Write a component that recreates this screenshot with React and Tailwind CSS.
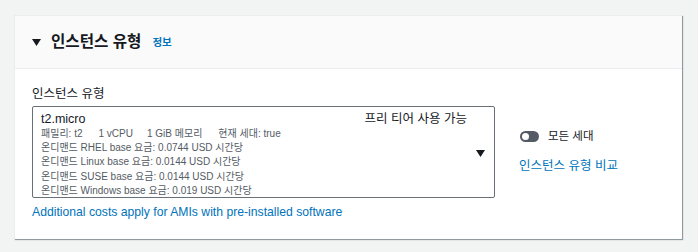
export default function App() {
  return (
    <div className="w-[698px] h-[252px] bg-[#f2f3f3] pt-[15px] pl-[14px] font-['Liberation_Sans','Noto_Sans_CJK_KR',sans-serif] text-[#16191f]">
      <div className="w-[668px] h-[224px] bg-white border-t border-l border-[#eaeded] shadow-[1px_1px_1px_0_rgba(0,28,36,0.3),1px_1px_0_0_rgba(0,28,36,0.15)]">
        <div className="h-[53px] bg-[#fafafa] border-b border-[#eaeded] flex items-center pl-[17px]">
          <svg width="9" height="7" viewBox="0 0 9 7" className="mr-[10px] mt-[1px]"><path d="M0 0H9L4.5 7Z" fill="#16191f" /></svg>
          <span className="text-[15.6px] font-bold leading-none">인스턴스 유형</span>
          <span className="text-[10.5px] text-[#0073bb] font-bold ml-[11px] mt-[2px]">정보</span>
        </div>
        <div className="flex pl-[17px] pt-[15px]">
          <div className="w-[463px]">
            <div className="text-[12.5px] leading-[20px] h-[20px] mb-[2px]">인스턴스 유형</div>
            <div className="border border-[#687078] rounded-[2px] h-[92px] pl-[8px] pr-[9px] pt-[3px] flex">
              <div className="flex-1">
                <div className="flex justify-between items-center h-[17px]">
                  <span className="text-[12.5px] leading-[16px]">t2.micro</span>
                  <span className="text-[12.5px] leading-[16px] mr-[9px]">프리 티어 사용 가능</span>
                </div>
                <div className="text-[10px] leading-[14.2px] text-[#545b64]">
                  <div>패밀리: t2<span className="ml-[16px]">1 vCPU</span><span className="ml-[14px]">1 GiB 메모리</span><span className="ml-[16px]">현재 세대: true</span></div>
                  <div>온디맨드 RHEL base 요금: 0.0744 USD 시간당</div>
                  <div>온디맨드 Linux base 요금: 0.0144 USD 시간당</div>
                  <div>온디맨드 SUSE base 요금: 0.0144 USD 시간당</div>
                  <div>온디맨드 Windows base 요금: 0.019 USD 시간당</div>
                </div>
              </div>
              <div className="flex items-center">
                <svg width="9" height="7" viewBox="0 0 9 7"><path d="M0 0H9L4.5 7Z" fill="#16191f" /></svg>
              </div>
            </div>
            <div className="text-[12.2px] leading-[16px] text-[#0073bb] mt-[6px]">Additional costs apply for AMIs with pre-installed software</div>
          </div>
          <div className="ml-[25px] pt-[44px]">
            <div className="flex items-center">
              <div className="w-[19px] h-[11px] rounded-full bg-[#545b64] relative">
                <div className="absolute left-[2px] top-[2px] w-[7px] h-[7px] rounded-full bg-white"></div>
              </div>
              <span className="text-[11.5px] ml-[9px]">모든 세대</span>
            </div>
            <div className="text-[12.5px] text-[#0073bb] mt-[12px] -ml-[1px]">인스턴스 유형 비교</div>
          </div>
        </div>
      </div>
    </div>
  );
}
